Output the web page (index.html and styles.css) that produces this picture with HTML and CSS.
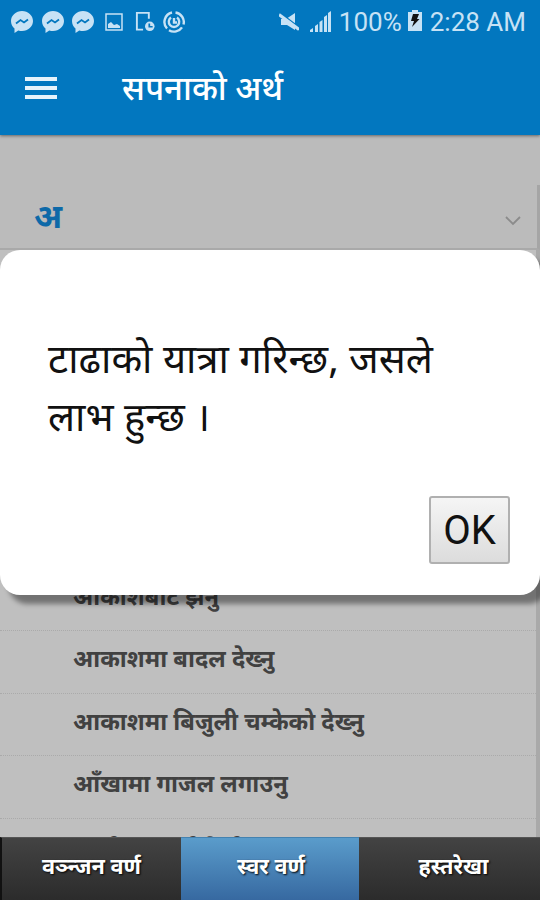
FILE: index.html
```
<!DOCTYPE html>
<html lang="hi">
<head>
  <meta charset="UTF-8">
  <meta name="viewport" content="width=device-width, initial-scale=1">
  <title>सपनाको अर्थ</title>
  <link rel="stylesheet" href="styles.css">
</head>

<body>
  <div class="app">
    <header class="header">
      <div class="status-bar">
        <div class="status-left">
          <svg class="chat-icon" viewBox="0 0 22 22"><path class="fill" d="M11 0C5 0 0 4.500 0 10c0 3.100 1.300 5.700 3.500 7.500V22l3.800-2.500c1.200.4 2.400.5 3.700.5 6.100 0 11-4.500 11-10S17.100 0 11 0z"/><path class="cut" d="M5 12.500l4.500-3.500 3.500 2.500 4-3"/></svg>
          <svg class="chat-icon" viewBox="0 0 22 22"><path class="fill" d="M11 0C5 0 0 4.500 0 10c0 3.100 1.300 5.700 3.500 7.500V22l3.800-2.500c1.200.4 2.400.5 3.700.5 6.100 0 11-4.500 11-10S17.100 0 11 0z"/><path class="cut" d="M5 12.500l4.500-3.500 3.500 2.500 4-3"/></svg>
          <svg class="chat-icon" viewBox="0 0 22 22"><path class="fill" d="M11 0C5 0 0 4.500 0 10c0 3.100 1.300 5.700 3.500 7.500V22l3.800-2.500c1.200.4 2.400.5 3.700.5 6.100 0 11-4.500 11-10S17.100 0 11 0z"/><path class="cut" d="M5 12.500l4.500-3.500 3.500 2.500 4-3"/></svg>
          <svg class="image-icon" viewBox="0 0 18 18"><path class="line thin" d="M1 1h16v16H1z"/><path class="fill" d="M3 15v-4l3-2 3 3 3-1 3 2v2z"/></svg>
          <svg class="phone-icon" viewBox="0 0 20 22"><path class="line" d="M14 8V2H1.500v17.500H8"/><circle class="fill" cx="15" cy="16" r="5"/><path class="cut" d="M14.500 13v3.500H18"/></svg>
          <svg class="sync-icon" viewBox="0 0 22 22"><path class="line heavy" d="M9 1.500A9.700 9.700 0 0 0 4 17.500M6 19.300a9.700 9.700 0 0 0 13-3M20.500 13.500A9.700 9.700 0 0 0 12.500 1.500"/><path class="line heavy" d="M8 6.500a5.200 5.200 0 1 0 6 0M11 7v4.500h3"/></svg>
        </div>
        <div class="status-right">
          <svg class="mute-icon" viewBox="0 0 20 20"><path class="fill" d="M2 7h5l9-6v17L8 13H2z"/><path class="slash-gap" d="M0 0l21 16"/><path class="line slash" d="M0 2.500l20 15"/></svg>
          <svg class="signal-icon" viewBox="0 0 21 21"><path class="fill" d="M0 21v-2l3-2v4zM5 21v-6l3-2v8zM9.500 21V11l3-2v12zM14 21V6l3-2v17zM18 21V2l3-2v21z"/></svg>
          <span class="battery-text">100%</span>
          <svg class="battery-icon" viewBox="0 0 14 21"><path class="fill" d="M0 2h4V0h6v2h4v19H0z"/><path class="bolt" d="M5 4h6L9 9h2.500L4 17l2-6H3z"/></svg>
          <span class="clock">2:28 AM</span>
        </div>
      </div>
      <div class="title-bar">
        <div class="menu-button"><span></span><span></span><span></span></div>
        <h1 class="title">सपनाको अर्थ</h1>
      </div>
    </header>

    <main class="content">
      <div class="section-head">
        <span>अ</span>
        <svg class="chevron" viewBox="0 0 16 10"><path d="M1 1l7 7 7-7"/></svg>
      </div>
      <ul class="list">
        <li>आकाशबाट झर्नु</li>
        <li>आकाशमा बादल देख्नु</li>
        <li>आकाशमा बिजुली चम्केको देख्नु</li>
        <li>आँखामा गाजल लगाउनु</li>
        <li>आगो हात पोलेको</li>
      </ul>
    </main>

    <!-- Bottom tabs -->
    <nav class="tabs">
      <a class="tab" href="#">वञ्न्जन वर्ण</a>
      <a class="tab active" href="#">स्वर वर्ण</a>
      <a class="tab" href="#">हस्तरेखा</a>
    </nav>

    <!-- Meaning popup -->
    <div class="dialog">
      <p class="dialog-text">टाढाको यात्रा गरिन्छ, जसले लाभ हुन्छ ।</p>
      <button class="ok-button">OK</button>
    </div>
  </div>
</body>
</html>
```
FILE: styles.css
```
* {
  box-sizing: border-box;
}

body {
  margin: 0;
  font-family: 'Noto Sans Devanagari', 'Noto Sans', sans-serif;
}

.app {
  position: relative;
  display: flex;
  flex-direction: column;
  height: 900px;
  overflow: hidden;
  background: #bbb;
}

/* Header */
.header {
  flex: none;
  height: 135px;
  background: #0277bf;
  box-shadow: 0 1px 3px #666;
  z-index: 1;
}

.status-bar {
  display: flex;
  justify-content: space-between;
  align-items: center;
  height: 43px;
  padding: 0 14px 0 11px;
  color: #c7e2f5;
  font-family: Roboto, sans-serif;
  font-size: 26px;
}

.status-left,
.status-right {
  display: flex;
  align-items: center;
}

.chat-icon {
  width: 22px;
  height: 22px;
  margin-right: 8.500px;
}

.image-icon {
  width: 18px;
  height: 18px;
  margin: 0 12px 0 2px;
}

.phone-icon {
  width: 20px;
  height: 21px;
  margin-right: 8px;
}

.sync-icon {
  width: 22px;
  height: 22px;
}

.mute-icon {
  width: 20px;
  height: 20px;
  margin-right: 11px;
}

.signal-icon {
  width: 21px;
  height: 21px;
  margin-right: 8px;
}

.battery-icon {
  width: 14px;
  height: 21px;
  margin: 0 8px 2px 6px;
}

.fill {
  fill: #c7e2f5;
}

.line {
  fill: none;
  stroke: #c7e2f5;
  stroke-width: 2;
}

.thin {
  stroke-width: 1.500;
}

.heavy {
  stroke-width: 2.400;
}

.slash {
  stroke-width: 3;
}

.cut {
  fill: none;
  stroke: #0277bf;
  stroke-width: 1.800;
}

.slash-gap {
  stroke: #0277bf;
  stroke-width: 1.500;
}

.bolt {
  fill: #111;
}

.title-bar {
  display: flex;
  align-items: center;
  height: 90px;
  padding-left: 25px;
}

.menu-button {
  display: flex;
  flex-direction: column;
  gap: 5px;
  width: 32px;
  margin-right: 65px;
}

.menu-button span {
  height: 4px;
  background: #e6f3fb;
}

.title {
  margin: 0;
  padding-top: 7px;
  color: #fff;
  font-size: 33px;
  font-weight: 500;
  line-height: 50px;
}

/* List */
.content {
  flex: 1;
  min-height: 0;
  padding-top: 50px;
  overflow: hidden;
}

.section-head {
  display: flex;
  justify-content: space-between;
  align-items: center;
  height: 65px;
  padding: 7px 16px 0 34px;
  border-right: 3px solid #a5a5a5;
  border-bottom: 2px solid #a9a9a9;
  color: #0d69a8;
  font-size: 33px;
  font-weight: bold;
  line-height: 56px;
}

.chevron {
  width: 16px;
  height: 10px;
  margin-top: 1px;
}

.chevron path {
  fill: none;
  stroke: #8b8b8b;
  stroke-width: 1.800;
}

.list {
  margin: 0;
  padding: 319px 0 0;
  border-right: 4px solid #a9a9a9;
  background: #bfbfbf;
  list-style: none;
}

.list li {
  height: 62.400px;
  padding: 0 0 0 73px;
  border-bottom: 1px dotted #aaa;
  color: #414141;
  font-size: 23.700px;
  font-weight: bold;
  line-height: 62px;
  white-space: nowrap;
}

.list li:last-child {
  padding-top: 3px;
  word-spacing: 5px;
}

/* Tabs */
.tabs {
  display: grid;
  grid-template-columns: 181px 178px 181px;
  flex: none;
  height: 63px;
}

.tab {
  border-top: 1px solid #555;
  background: linear-gradient(#434343, #2b2b2b);
  color: #fff;
  font-size: 21.700px;
  font-weight: bold;
  line-height: 63px;
  text-align: center;
  text-decoration: none;
  text-shadow: 1px 1px 2px #000;
}

.tab.active {
  padding-left: 2px;
  border-top-color: #4482b0;
  background: linear-gradient(#5a9ccb, #3668a0);
}

.tab:first-child {
  border-left: 2px solid #111;
}

.tab:last-child {
  padding-left: 8px;
}

/* Dialog */
.dialog {
  position: absolute;
  top: 250px;
  left: 0;
  z-index: 2;
  display: flex;
  flex-direction: column;
  justify-content: space-between;
  align-items: flex-end;
  width: 540px;
  height: 345px;
  padding: 84px 30px 31px 48px;
  border-radius: 20px;
  background: #fff;
  box-shadow: 8px 9px 5px rgba(0, 0, 0, 0.4);
}

.dialog-text {
  align-self: stretch;
  margin: 0;
  padding-right: 40px;
  color: #111;
  font-size: 40px;
  line-height: 58px;
}

.ok-button {
  width: 81px;
  height: 68px;
  padding: 0;
  border: 2px solid #b0b0b0;
  border-radius: 3px;
  background: linear-gradient(#f5f5f5, #dcdcdc);
  color: #111;
  font-family: Roboto, sans-serif;
  font-size: 40px;
}
```
